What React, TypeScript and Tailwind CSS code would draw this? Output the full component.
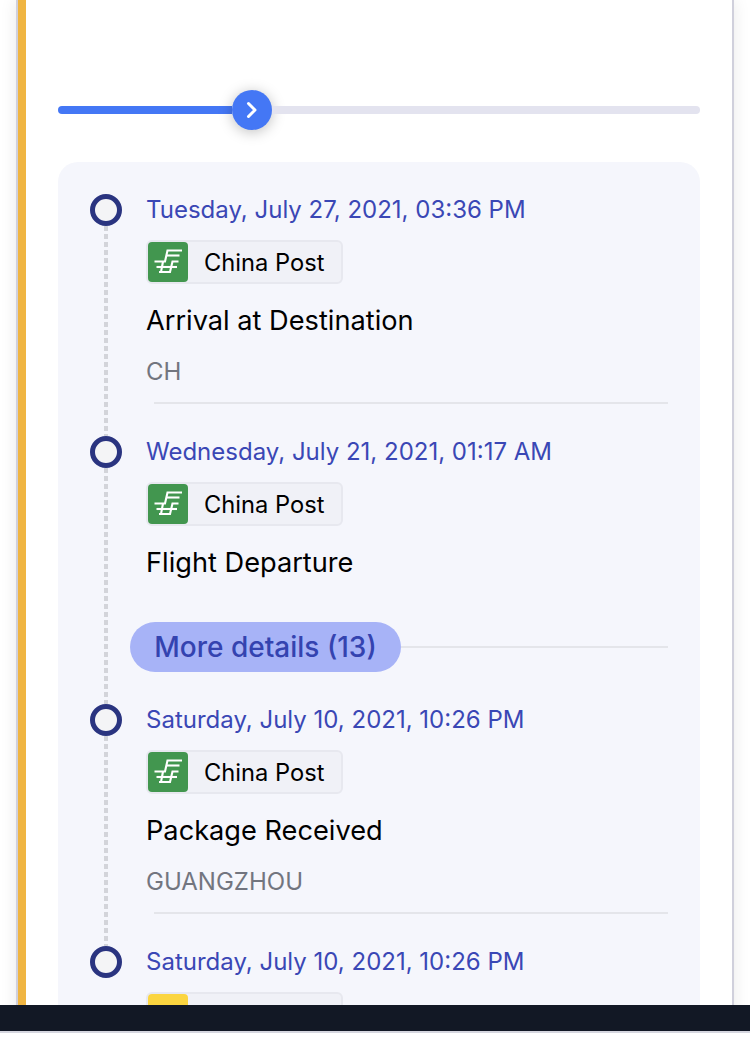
import React from "react";

const Logo = ({ yellow }: { yellow?: boolean }) =>
  yellow ? (
    <div className="w-10 h-10 shrink-0 rounded-[4px] bg-[#fbd540]" />
  ) : (
    <div className="w-10 h-10 shrink-0 rounded-[4px] bg-[#42964f]">
      <svg viewBox="0 0 40 40" width="40" height="40" fill="none" stroke="#fff" strokeWidth="2.1">
        <path d="M34 8.5H19.5L17 19.5H6.5" />
        <path d="M31.5 13.5H18.5" />
        <path d="M30.5 19.5H24.5L22 30H11" />
        <path d="M29 25H8.5" />
        <path d="M15 19.5L13 30" />
      </svg>
    </div>
  );

const Badge = ({ yellow }: { yellow?: boolean }) => (
  <div className="flex items-center w-[197px] h-11 rounded-[6px] border-2 border-[#e7e8ef] bg-[#f0f1f7] mt-[14px]">
    <Logo yellow={yellow} />
    {!yellow && <span className="ml-[16px] pt-[2px] text-[23.7px] leading-8 text-black">China Post</span>}
  </div>
);

const Line = () => (
  <div className="w-1 flex-1 bg-[repeating-linear-gradient(to_bottom,#d3d4da_0px,#d3d4da_5px,transparent_5px,transparent_8px)]" />
);

const Rail = ({ dot = true, line = true }: { dot?: boolean; line?: boolean }) => (
  <div className="w-8 shrink-0 flex flex-col items-center mr-[25px]">
    {dot && <div className="w-8 h-8 shrink-0 rounded-full border-[5px] border-[#2a3480] bg-[#f4f4f6]" />}
    {line && <Line />}
  </div>
);

const Event = ({
  date,
  title,
  sub,
  divider,
}: {
  date: string;
  title: string;
  sub?: string;
  divider?: boolean;
}) => (
  <div className="flex">
    <Rail />
    <div className="flex-1 min-w-0">
      <div className="text-[24px] leading-8 text-[#3a47b5] whitespace-nowrap -ml-px">{date}</div>
      <div className="-ml-px">
        <Badge />
      </div>
      <div className="mt-[18px] pt-px -mb-px -ml-px text-[27.2px] leading-9 text-black">{title}</div>
      {sub && <div className="mt-[18px] -ml-px text-[24px] leading-8 text-[#72757f]">{sub}</div>}
      {divider && <div className="mt-[14px] mb-8 ml-[7px] h-[2px] bg-[#e4e5ea]" />}
    </div>
  </div>
);

export default function App() {
  return (
    <div className="w-[750px] h-[1049px] overflow-hidden bg-white font-['Inter',sans-serif]">
      <div className="h-[1005px] overflow-hidden px-4">
        <div className="h-[1100px] border-x-2 border-[#d0d0dc] bg-white shadow-[0_0_16px_rgba(0,0,0,0.09)]">
          <div className="h-full border-l-8 border-[#f0b542] px-8 pt-[90px]">
            <div className="flex items-center h-10">
              <div className="w-[174px] h-2 rounded-l-full bg-[#4477f5]" />
              <div className="w-10 h-10 shrink-0 rounded-full bg-[#4477f5] flex items-center justify-center shadow-[0_2px_14px_rgba(0,0,0,0.25)]">
                <svg viewBox="0 0 24 24" width="24" height="24" fill="none" stroke="#fff" strokeWidth="3" strokeLinecap="round" strokeLinejoin="round">
                  <path d="M8.5 5.5L15 12L8.5 18.5" />
                </svg>
              </div>
              <div className="flex-1 h-2 rounded-r-full bg-[#e3e3ef]" />
            </div>

            <div className="mt-8 rounded-t-[20px] bg-[#f5f6fc] pt-8 pl-8 pr-8">
              <Event date="Tuesday, July 27, 2021, 03:36 PM" title="Arrival at Destination" sub="CH" divider />
              <Event date="Wednesday, July 21, 2021, 01:17 AM" title="Flight Departure" />
              <div className="flex">
                <Rail dot={false} />
                <div className="flex-1 min-w-0 flex items-center pt-[42px] pb-8 -ml-[17px]">
                  <div className="h-[50px] w-[271px] shrink-0 rounded-full bg-[#a7b3f7] text-[#3443b0] text-[28px] font-[450] flex items-center justify-center whitespace-nowrap">
                    More details (13)
                  </div>
                  <div className="flex-1 h-[2px] bg-[#e4e5ea]" />
                </div>
              </div>
              <Event date="Saturday, July 10, 2021, 10:26 PM" title="Package Received" sub="GUANGZHOU" divider />
              <div className="flex">
                <Rail line={false} />
                <div className="flex-1 min-w-0">
                  <div className="text-[24px] leading-8 text-[#3a47b5] whitespace-nowrap -ml-px">Saturday, July 10, 2021, 10:26 PM</div>
                  <div className="-ml-px">
                    <Badge yellow />
                  </div>
                </div>
              </div>
            </div>
          </div>
        </div>
      </div>
      <div className="h-[26px] bg-[#121825]" />
      <div className="h-[2px] bg-[#d5d6df]" />
    </div>
  );
}
